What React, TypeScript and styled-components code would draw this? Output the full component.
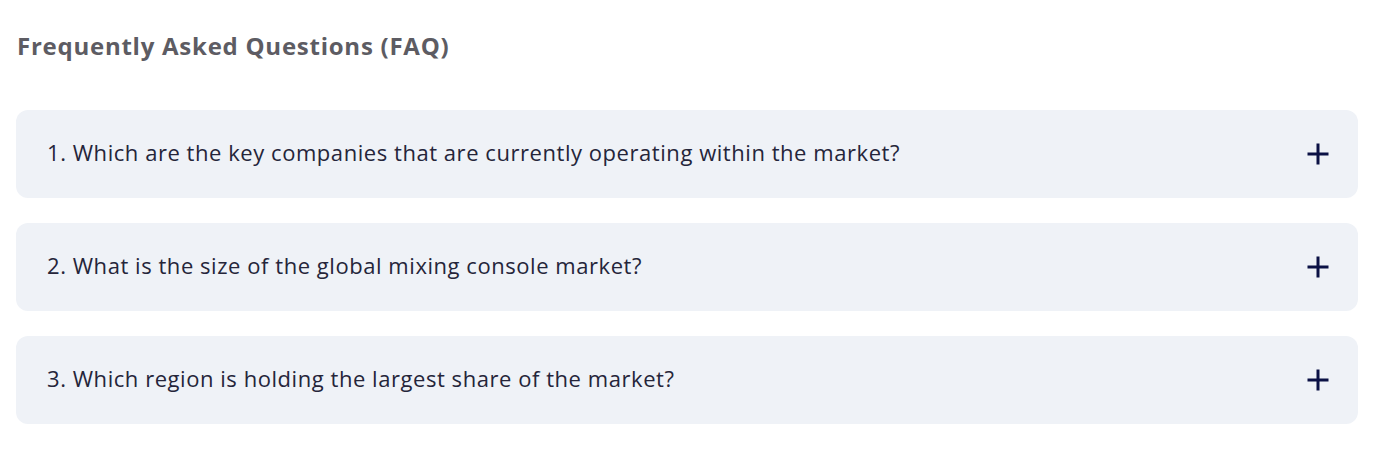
import React from "react";
import styled, { createGlobalStyle } from "styled-components";

const GlobalStyle = createGlobalStyle`
  body {
    margin: 0;
    background: #ffffff;
  }
`;

const questions = [
  "1. Which are the key companies that are currently operating within the market?",
  "2. What is the size of the global mixing console market?",
  "3. Which region is holding the largest share of the market?",
];

const PlusIcon = () => (
  <svg width="22" height="22" viewBox="0 0 22 22">
    <path d="M11 0.5v21M0.5 11h21" stroke="#0b1145" strokeWidth="3" fill="none" />
  </svg>
);

const App: React.FC = () => {
  return (
    <>
      <GlobalStyle />
      <Section>
        <Heading>Frequently Asked Questions (FAQ)</Heading>
        <List>
          {questions.map((q) => (
            <Item key={q}>
              <Question>{q}</Question>
              <Toggle type="button" aria-label="Expand">
                <PlusIcon />
              </Toggle>
            </Item>
          ))}
        </List>
      </Section>
    </>
  );
};

const Section = styled.section`
  padding: 29px 29px 0 16px;
`;

const Heading = styled.h2`
  margin: 0 0 0 1px;
  font-family: "Open Sans", sans-serif;
  font-weight: 700;
  font-size: 24px;
  letter-spacing: 0.75px;
  line-height: 34px;
  color: #5d5c63;
`;

const List = styled.div`
  display: flex;
  flex-direction: column;
  gap: 25px;
  margin-top: 47px;
`;

const Item = styled.div`
  display: flex;
  align-items: center;
  justify-content: space-between;
  height: 88px;
  padding: 0 29px 0 31px;
  background: #eff2f7;
  border-radius: 12px;
`;

const Question = styled.span`
  margin-bottom: 4px;
  font-family: "Open Sans", sans-serif;
  font-size: 22px;
  letter-spacing: 0.55px;
  color: #25253a;
`;

const Toggle = styled.button`
  display: flex;
  padding: 0;
  border: none;
  background: none;
  cursor: pointer;
`;

export default App;
